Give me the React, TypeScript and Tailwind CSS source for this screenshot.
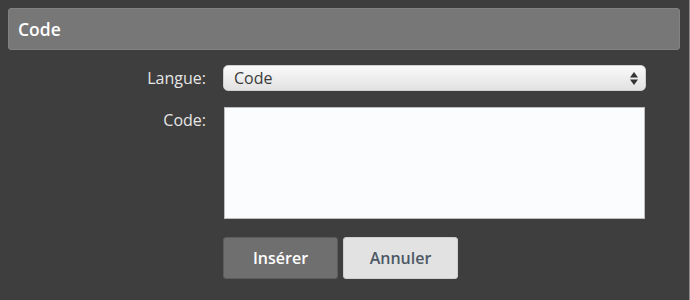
export default function App() {
  return (
    <div
      className="w-[690px] h-[300px] bg-[#3e3e3e] pt-2 pl-2 pr-[9px] border-r border-[#8a8a8a]"
      style={{ fontFamily: '"Open Sans", sans-serif' }}
    >
      <div className="h-[42px] rounded-[3px] bg-[#777777] border border-[#828282] flex items-center pl-[9px]">
        <span className="text-white text-[17.5px] font-semibold">Code</span>
      </div>

      <div className="mt-[15px] grid grid-cols-[198px_1fr] gap-x-[17px] pr-[34px]">
        <label className="text-[#e6e6e6] text-[16px] text-right leading-[26px]">Langue:</label>
        <div className="relative h-[26px] rounded-[5px] bg-gradient-to-b from-[#fafafa] to-[#e2e2e2] border border-[#cfcfcf] flex items-center pl-[10px]">
          <span className="text-[#3a3a3a] text-[16px]">Code</span>
          <svg className="absolute right-[7px] top-[6px]" width="8" height="13" viewBox="0 0 8 13">
            <path d="M4 0 L8 5.5 L0 5.5 Z" fill="#333" />
            <path d="M0 7.5 L8 7.5 L4 13 Z" fill="#333" />
          </svg>
        </div>

        <label className="text-[#e6e6e6] text-[16px] text-right leading-[26px] mt-[16px]">Code:</label>
        <div className="mt-[16px] ml-[1px] mr-[1px] h-[112px] bg-[#fbfcfe] border border-[#bdbdbd]"></div>

        <div></div>
        <div className="mt-[18px] flex gap-[5px]">
          <button className="w-[115px] h-[42px] rounded-[3px] bg-[#6f6f6f] border border-[#5c5c5c] text-white text-[16px] font-semibold">
            Insérer
          </button>
          <button className="w-[115px] h-[42px] rounded-[3px] bg-[#e2e2e2] border border-[#cfcfcf] text-[#4d5866] text-[16px] font-semibold">
            Annuler
          </button>
        </div>
      </div>
    </div>
  )
}
